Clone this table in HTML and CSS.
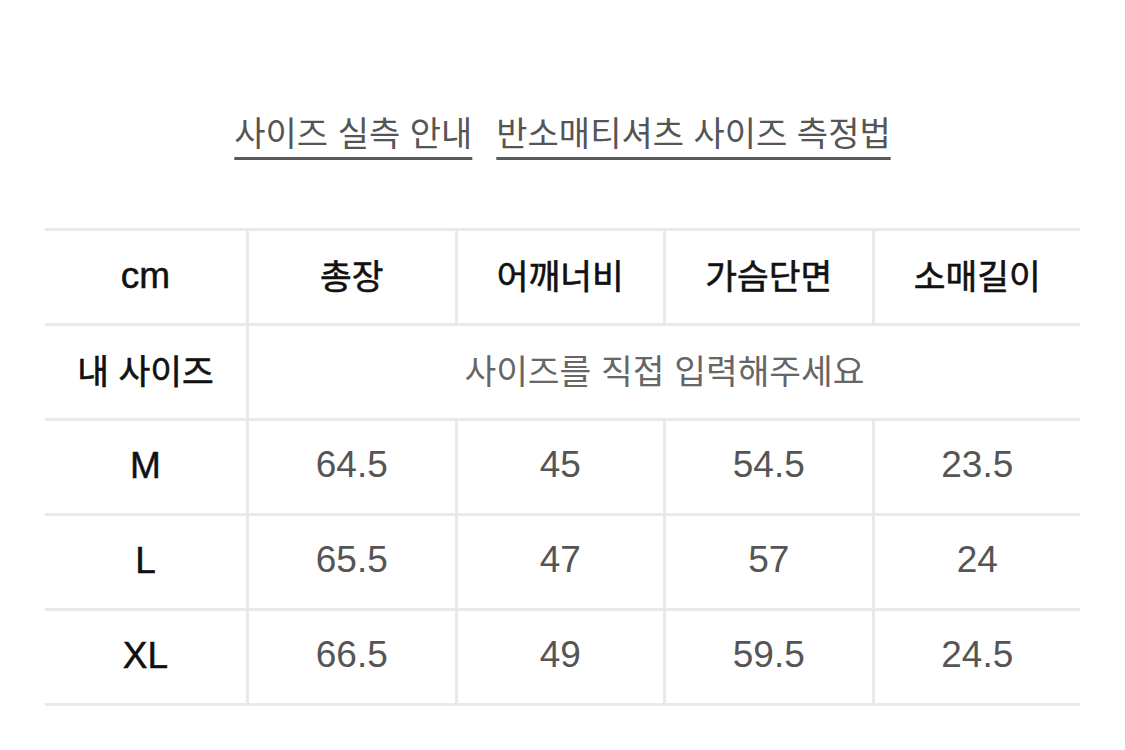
FILE: index.html
```html
<!DOCTYPE html>
<html lang="ko">
<head>
<meta charset="utf-8">
<title>사이즈 실측 안내</title>
<link rel="stylesheet" href="styles.css">
</head>
<body>
<div class="page">
  <nav class="links">
    <a class="link" href="#">사이즈 실측 안내</a>
    <a class="link" href="#">반소매티셔츠 사이즈 측정법</a>
  </nav>
  <div class="size-table">
    <div class="cell head">cm</div>
    <div class="cell head ko">총장</div>
    <div class="cell head ko">어깨너비</div>
    <div class="cell head ko">가슴단면</div>
    <div class="cell head ko">소매길이</div>

    <div class="cell head ko">내 사이즈</div>
    <div class="cell hint">사이즈를 직접 입력해주세요</div>

    <div class="cell head">M</div>
    <div class="cell val">64.5</div>
    <div class="cell val">45</div>
    <div class="cell val">54.5</div>
    <div class="cell val">23.5</div>

    <div class="cell head">L</div>
    <div class="cell val">65.5</div>
    <div class="cell val">47</div>
    <div class="cell val">57</div>
    <div class="cell val">24</div>

    <div class="cell head">XL</div>
    <div class="cell val">66.5</div>
    <div class="cell val">49</div>
    <div class="cell val">59.5</div>
    <div class="cell val">24.5</div>
  </div>
</div>
</body>
</html>
```

FILE: styles.css
```css
html, body {
  margin: 0;
  padding: 0;
  background: #ffffff;
}

body {
  font-family: "Liberation Sans", "Noto Sans CJK KR", sans-serif;
  width: 1125px;
  height: 750px;
  overflow: hidden;
}

.page {
  padding: 0 45px;
}

.links {
  display: flex;
  justify-content: center;
  gap: 24px;
  padding-top: 112px;
  margin-bottom: 76px;
  height: 40px;
  line-height: 40px;
}

.link {
  font-family: "Noto Sans CJK KR", sans-serif;
  font-size: 34px;
  color: #555555;
  text-decoration: underline;
  text-decoration-thickness: 3px;
  text-underline-offset: 11px;
  text-decoration-color: #5a5a5a;
}

.size-table {
  display: grid;
  grid-template-columns: 201px repeat(4, 1fr);
  grid-auto-rows: 92px;
  gap: 3px;
  background: #e9e9e9;
  border-top: 3px solid #e9e9e9;
  border-bottom: 3px solid #e9e9e9;
}

.cell {
  background: #ffffff;
  display: flex;
  align-items: center;
  justify-content: center;
  padding-bottom: 3px;
}

.head {
  font-size: 37px;
  color: #111111;
  -webkit-text-stroke: 0.5px #111111;
}

.head.ko {
  font-family: "Noto Sans CJK KR", sans-serif;
  font-weight: 400;
  font-size: 34.5px;
  -webkit-text-stroke: 0.6px #111111;
  padding-bottom: 6px;
}

.hint {
  grid-column: 2 / span 4;
  font-family: "Noto Sans CJK KR", sans-serif;
  font-size: 34.5px;
  color: #666666;
  padding-bottom: 6px;
}

.val {
  font-size: 37px;
  color: #555555;
  padding-bottom: 5px;
}
```
